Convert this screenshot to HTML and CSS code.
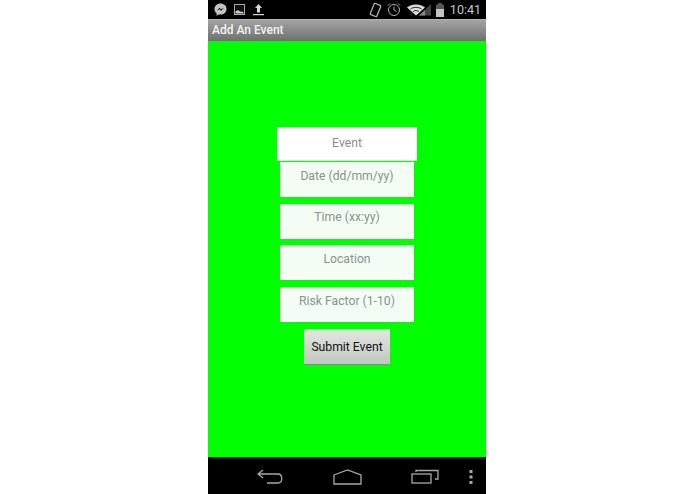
FILE: index.html
```html
<!DOCTYPE html>
<html lang="en">
<head>
    <meta charset="UTF-8">
    <title>Add An Event</title>
    <link rel="stylesheet" href="styles.css">
</head>
<body>
    <div class="phone">
        <div class="status-bar">
            <div class="status-left">
                <svg width="13" height="13" viewBox="0 0 13 13"><path d="M6.500 .5C3 .5 .5 2.900 .5 6c0 1.800 .8 3.300 2.100 4.300V12.700l2.200-1.300c.5 .1 1.100 .2 1.700 .2 3.500 0 6-2.400 6-5.600S10 .5 6.500 .5z" fill="#c4c4c4"/><path d="M2.800 7.800 5.500 4.800l1.500 1.500 2.900-1.500-2.700 3-1.500-1.500z" fill="#111"/></svg>
                <svg width="11" height="11" viewBox="0 0 11 11"><rect x=".5" y=".5" width="10" height="10" fill="#111" stroke="#aaa"/><path d="M1.500 9.500V7.500L4 6l2 1.500 3.500 .5v1.500z" fill="#ccc"/></svg>
                <svg width="13" height="13" viewBox="0 0 13 13"><path d="M6.500 1 10 5H8v4.500H5V5H3z" fill="#d8d8d8"/><rect x="1" y="11" width="11" height="1.200" fill="#d8d8d8"/></svg>
            </div>
            <div class="status-right">
                <svg width="13" height="16" viewBox="0 0 13 16"><rect x="3" y="2" width="7" height="12" rx="1" transform="rotate(22 6.500 8)" fill="none" stroke="#b4b4b4" stroke-width="1.300"/></svg>
                <svg width="14" height="15" viewBox="0 0 14 15" fill="none" stroke="#b0b0b0"><circle cx="7" cy="8" r="5.500"/><path d="M7 4.500V8L9.500 9.500M1 3.500 3 1.500M13 3.500 11 1.500"/></svg>
                <svg class="signal" width="25" height="13" viewBox="0 0 25 13"><path d="M0 4.500C4.500 .5 13.500 .5 18 4.500L9 12.500z" fill="#ddd"/><path d="M3.500 6C6.500 3.800 11.500 3.800 14.500 6" stroke="#222" fill="none"/><path d="M6 8.500C7.500 7.300 10.500 7.300 12 8.500" stroke="#222" fill="none"/><path d="M12 12.500 24 1V12.500z" fill="#444"/><path d="M12 12.500 18 7V12.500z" fill="#888"/></svg>
                <svg width="8" height="14" viewBox="0 0 8 14"><rect x="0" y="1.500" width="8" height="12.500" fill="#555"/><rect x="2" y="0" width="4" height="2" fill="#555"/><rect x="0" y="6" width="8" height="8" fill="#c4c4c4"/></svg>
                <span class="clock">10:41</span>
            </div>
        </div>
        <div class="title-bar">Add An Event</div>
        <div class="content">
            <form class="event-form">
                <div class="field field-active">Event</div>
                <div class="field">Date (dd/mm/yy)</div>
                <div class="field">Time (xx:yy)</div>
                <div class="field">Location</div>
                <div class="field">Risk Factor (1-10)</div>
                <div class="btn">Submit Event</div>
            </form>
        </div>
        <div class="nav-bar">
            <svg class="nav-back" width="27" height="16" viewBox="0 0 27 16" fill="none" stroke="#a8a8a8" stroke-width="1.300"><path d="M6 1 1 5 6 9M1 5H21C26 5 26 14 21 14H10"/></svg>
            <svg class="nav-home" width="29" height="16" viewBox="0 0 29 16" fill="none" stroke="#a8a8a8" stroke-width="1.300"><path d="M1 6 14.500 1 28 6V15H1z"/></svg>
            <svg class="nav-recent" width="28" height="15" viewBox="0 0 28 15" fill="none" stroke="#a8a8a8" stroke-width="1.300"><rect x="1" y="5" width="19" height="9"/><path d="M5 3V1.500H27V10H24"/></svg>
            <svg class="nav-more" width="4" height="14" viewBox="0 0 4 14" fill="#a8a8a8"><rect x=".5" y="0" width="3" height="3"/><rect x=".5" y="5.500" width="3" height="3"/><rect x=".5" y="11" width="3" height="3"/></svg>
        </div>
    </div>
</body>
</html>
```

FILE: styles.css
```css
body {
  margin: 0;
  background-color: #fff;
  font-family: "Roboto", sans-serif;
}
.phone {
  width: 278px;
  height: 494px;
  margin-left: 208px;
  display: flex;
  flex-direction: column;
}
.status-bar {
  height: 19px;
  background-color: #000;
  display: flex;
  justify-content: space-between;
  align-items: center;
  padding: 0 5px 0 6px;
}
.status-left {
  display: flex;
  align-items: center;
  gap: 7px;
}
.status-right {
  display: flex;
  align-items: center;
  gap: 5px;
}
.signal {
  margin-left: 1px;
  margin-right: -1px;
}
.clock {
  color: #c8c8c8;
  font-size: 12.5px;
  margin-left: 1px;
}
.title-bar {
  height: 22px;
  line-height: 20px;
  background: linear-gradient(#a4a4a4, #6f6f6f);
  border-top: 1px solid #b0b0b0;
  box-sizing: border-box;
  color: #f2f2f2;
  font-size: 12px;
  font-weight: 500;
  padding-left: 4px;
}
.content {
  flex: 1;
  background-color: #00ff00;
  padding-top: 86px;
}
.event-form {
  display: flex;
  flex-direction: column;
  align-items: center;
  gap: 6.7px;
}
.field {
  width: 134px;
  height: 35px;
  box-sizing: border-box;
  background-color: #f3fdf4;
  color: #8a938c;
  font-size: 12.2px;
  line-height: 15px;
  padding-top: 6.6px;
  text-align: center;
}
.field-active {
  width: 140px;
  height: 34px;
  margin-bottom: -5.7px;
  background-color: #fff;
  border-bottom: 1px solid #d8fbd8;
  line-height: 16px;
  padding-top: 8px;
  color: #8c8c8c;
}
.btn {
  width: 86px;
  height: 36px;
  box-sizing: border-box;
  background: linear-gradient(#e2e6e2, #c0c8c0);
  border-bottom: 1px solid #6f9a6f;
  color: #111;
  font-size: 12.2px;
  line-height: 36px;
  text-align: center;
}
.nav-bar {
  height: 37px;
  background-color: #000;
  position: relative;
}
.nav-bar svg {
  position: absolute;
}
.nav-back {
  left: 49px;
  top: 12px;
}
.nav-home {
  left: 125px;
  top: 12px;
}
.nav-recent {
  left: 203px;
  top: 12px;
}
.nav-more {
  left: 261px;
  top: 13px;
}
```
